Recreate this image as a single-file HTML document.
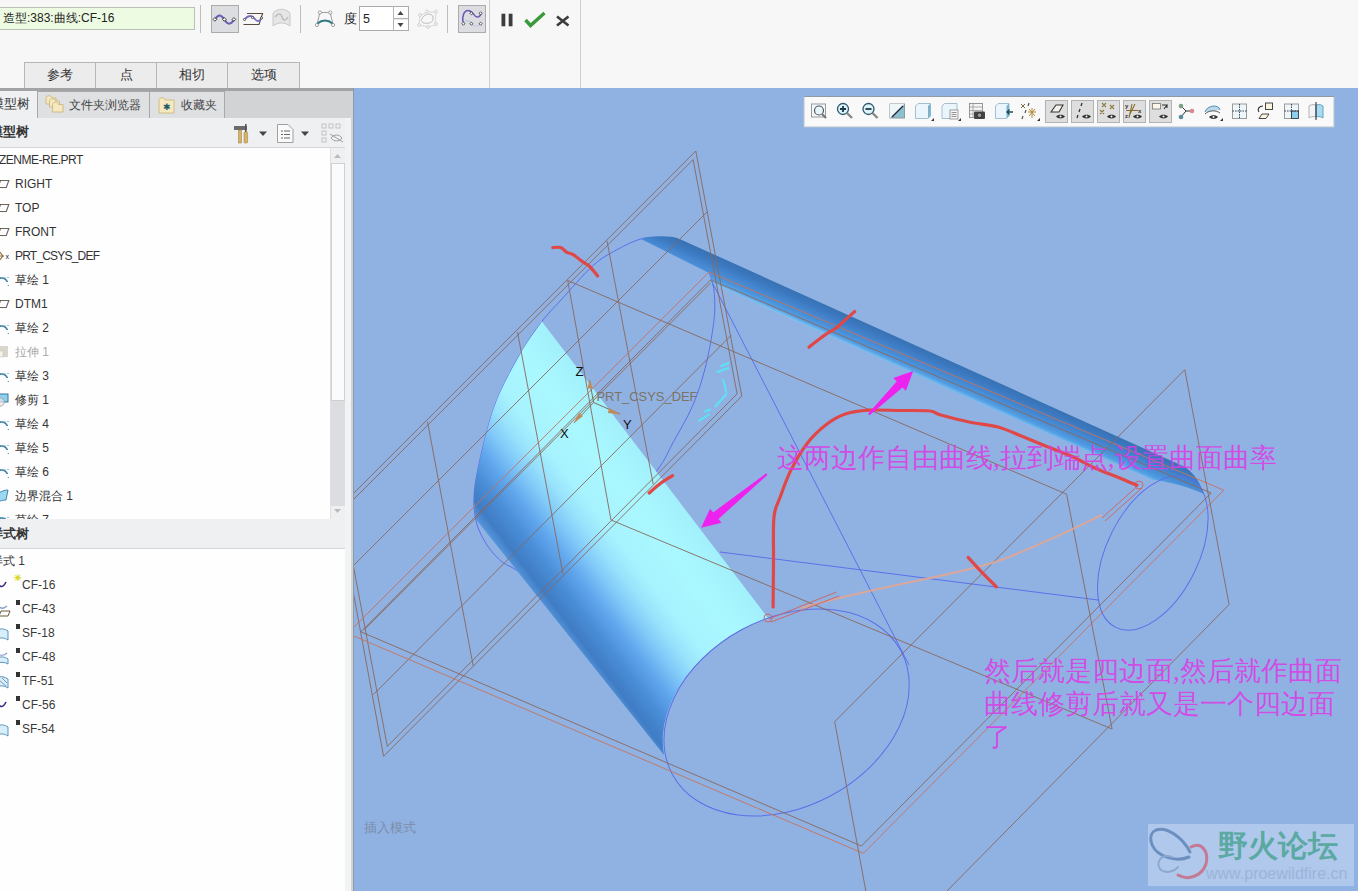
<!DOCTYPE html>
<html><head><meta charset="utf-8">
<style>
*{margin:0;padding:0;box-sizing:border-box}
html,body{width:1358px;height:891px;overflow:hidden;background:#f7f7f7;font-family:"Liberation Sans",sans-serif;font-size:12px;color:#333}
.abs{position:absolute}
svg{display:block}
#top{left:0;top:0;width:1358px;height:88px;background:#f7f7f7}
#field{left:-2px;top:7px;width:197px;height:23px;background:#eefbe3;border:1px solid #b9c0b5;font-size:12px;line-height:21px;padding-left:4px;color:#222;white-space:nowrap}
.sep{width:1px;background:#bdbdbd}
.vline{width:1px;background:#cfcfcf}
.ibox{background:#dcdde0;border:1px solid #ababab}
.rtab{top:62px;height:27px;background:#ececed;border:1px solid #b5b5b5;border-bottom:none;text-align:center;line-height:25px;font-size:12.5px;color:#333}
#ptabsbar{left:0;top:88px;width:353px;height:30px;background:#d2d3d5;border-top:3px solid #a3a3a3}
.ptab{top:91px;height:27px;background:#dfe0e2;border:1px solid #a8a8aa;border-bottom:none;line-height:26px;font-size:12px;color:#444;white-space:nowrap}
#hdr1{left:0;top:118px;width:346px;height:30px;background:#eff0f2;border-bottom:1px solid #d6d6d8}
#tree{left:0;top:148px;width:346px;height:371px;background:#fefefe}
#hdr2{left:0;top:519px;width:346px;height:30px;background:#eff0f2;border-bottom:1px solid #d6d6d8}
#tree2{left:0;top:549px;width:346px;height:342px;background:#fefefe}
#pgap{left:345px;top:118px;width:8px;height:773px;background:#f2f3f5;border-right:2px solid #d0d2d4}
#vp{left:353px;top:88px;width:1005px;height:803px;background:#8fb2e3;overflow:hidden;border-left:1px solid #8a9aa6}
.row{position:absolute;height:24px;line-height:24px;font-size:12px;color:#3a3a3a;white-space:nowrap}
.ic{position:absolute}
</style></head><body>
<div id="top" class="abs"></div>
<div id="field" class="abs">造型:383:曲线:CF-16</div>
<div class="abs sep" style="left:200px;top:5px;height:28px"></div>
<div class="abs ibox" style="left:211px;top:5px;width:28px;height:28px"></div>
<div class="abs sep" style="left:300px;top:5px;height:28px"></div>
<div class="abs sep" style="left:447px;top:5px;height:28px"></div>
<div class="abs ibox" style="left:458px;top:5px;width:28px;height:28px"></div>
<div class="abs vline" style="left:489px;top:0;height:88px"></div>
<div class="abs vline" style="left:580px;top:0;height:88px"></div>
<svg class="abs" style="left:0;top:0" width="600" height="40" viewBox="0 0 600 40">
 <!-- wave icon -->
 <path d="M215,19.5 C218,14 221,14 224.3,19.5 C227.5,25 231,25 234,19.5" fill="none" stroke="#6b5cb5" stroke-width="2"/>
 <g fill="#fff" stroke="#222" stroke-width="0.8"><rect x="213.6" y="18.1" width="2.6" height="2.6" transform="rotate(45 214.9 19.4)"/><rect x="223" y="18.1" width="2.6" height="2.6" transform="rotate(45 224.3 19.4)"/><rect x="232.6" y="18.1" width="2.6" height="2.6" transform="rotate(45 233.9 19.4)"/></g>
 <!-- curve on plane -->
 <path d="M247,13.5 L262.6,13.5 L259,24.5 L243.5,24.5" fill="none" stroke="#5a4a40" stroke-width="1.1"/>
 <path d="M244.5,19.5 C248,15 252,15 254.5,18.5 C257,22 259.5,22 261.5,18" fill="none" stroke="#7a6cc0" stroke-width="1.8"/>
 <g fill="#fff" stroke="#222" stroke-width="0.7"><circle cx="244.5" cy="19.5" r="1.1"/><circle cx="252.5" cy="17.5" r="1.1"/><circle cx="261.5" cy="18" r="1.1"/></g>
 <!-- gray surface -->
 <path d="M273,13 C278,8 285,8 290,13 L290,26 C285,22 278,22 273,26 Z" fill="#e6e6e6" stroke="#c8c8c8" stroke-width="1"/>
 <path d="M275,17 C278,13 281,13 282,17 C283,21 286,21 288,17" fill="none" stroke="#bdbdbd" stroke-width="1.5"/>
 <!-- degree icon -->
 <path d="M319.9,12.5 L330.2,12.5 L333.1,25 M319.9,12.5 L316.9,25" fill="none" stroke="#888" stroke-width="0.8"/>
 <path d="M317.5,23.5 C322,19.5 328,19.5 332.5,23.5" fill="none" stroke="#2c7a82" stroke-width="2"/>
 <g fill="#fff" stroke="#888" stroke-width="0.8"><circle cx="319.9" cy="12.5" r="1.6"/><circle cx="330.2" cy="12.5" r="1.6"/><circle cx="316.9" cy="25" r="1.6"/><circle cx="333.1" cy="25" r="1.6"/></g>
 <text x="343.5" y="23" font-family="Liberation Sans" font-size="13" fill="#222">度</text>
 <rect x="359.5" y="6.5" width="49" height="24" fill="#fff" stroke="#ababab"/>
 <line x1="393.5" y1="6.5" x2="393.5" y2="30.5" stroke="#b5b5b5"/>
 <line x1="394" y1="18.6" x2="408" y2="18.6" stroke="#b5b5b5" stroke-width="1.4"/>
 <path d="M397.5,15 L400.5,11 L403.5,15 Z M397.5,23 L400.5,27 L403.5,23 Z" fill="#444"/>
 <text x="363" y="23" font-family="Liberation Sans" font-size="12.5" fill="#222">5</text>
 <!-- gray blob icon -->
 <path d="M420,16 L427,12 L436,12 L435,25 L428,27 L419,25 Z" fill="none" stroke="#cfcfcf" stroke-width="0.8"/>
 <path d="M422,19 C423,14 432,12 433,17 C434,23 428,24 424,23 C421,22 421,20 422,19Z" fill="none" stroke="#bdbdbd" stroke-width="1"/>
 <g fill="#f3f3f3" stroke="#c8c8c8" stroke-width="0.7"><circle cx="420" cy="15" r="1.5"/><circle cx="427" cy="11.5" r="1.5"/><circle cx="436" cy="11.5" r="1.5"/><circle cx="436" cy="24" r="1.5"/><circle cx="428" cy="27" r="1.5"/><circle cx="419" cy="25" r="1.5"/></g>
 <!-- curvature selected icon -->
 <path d="M463,22 C462,16 464,10.5 468,10.5 C473,10.5 474,17 477,17 C480,17 481,14 481,13.3" fill="none" stroke="#6e5cb8" stroke-width="1.6"/>
 <path d="M463.3,23.6 C467,19 469,20 471.4,23.6 C474,27 478,27 480.6,23.6" fill="none" stroke="#c0cce0" stroke-width="1.4"/>
 <g fill="#fff" stroke="#222" stroke-width="0.7"><rect x="462.3" y="22.6" width="2.2" height="2.2" transform="rotate(45 463.4 23.7)"/><rect x="470.3" y="22.6" width="2.2" height="2.2" transform="rotate(45 471.4 23.7)"/><rect x="479.5" y="22.6" width="2.2" height="2.2" transform="rotate(45 480.6 23.7)"/><rect x="470.3" y="12.2" width="2.2" height="2.2" transform="rotate(45 471.4 13.3)"/><rect x="479.5" y="12.2" width="2.2" height="2.2" transform="rotate(45 480.6 13.3)"/></g>
 <!-- pause check x -->
 <rect x="501.5" y="13.7" width="3.8" height="12.6" fill="#3c3c3c"/><rect x="508.7" y="13.7" width="3.8" height="12.6" fill="#3c3c3c"/>
 <path d="M525.5,20 L530.5,25.5 L544.5,13" fill="none" stroke="#3a9a3a" stroke-width="3.4"/>
 <path d="M557,16.5 L568.5,25.5 M568.5,16.5 L557,25.5" stroke="#3c3c3c" stroke-width="2.6"/>
</svg>
<div class="abs rtab" style="left:24px;width:72px">参考</div>
<div class="abs rtab" style="left:95px;width:62px">点</div>
<div class="abs rtab" style="left:156px;width:72px">相切</div>
<div class="abs rtab" style="left:227px;width:73px">选项</div>

<div id="ptabsbar" class="abs"></div>
<div class="abs" style="left:0;top:91px;width:37px;height:28px;background:#eff0f2"></div>
<div class="abs row" style="left:-9px;top:92px;font-size:13px;line-height:24px;color:#333">模型树</div>
<div class="abs ptab" style="left:37px;width:113px;padding-left:31px">文件夹浏览器</div>
<div class="abs ptab" style="left:149px;width:76px;padding-left:31px">收藏夹</div>
<svg class="abs" style="left:44px;top:93px" width="24" height="24" viewBox="0 0 24 24">
 <g fill="#f6e9c0" stroke="#c9b27a" stroke-width="0.8"><path d="M2,5 C2,2 8,2 8,5 L12,5 L12,11 L2,11 Z"/><path d="M5.5,8 C5.5,5 11.5,5 11.5,8 L15.5,8 L15.5,14 L5.5,14 Z"/><path d="M8.5,11.5 C8.5,8.5 14.5,8.5 14.5,11.5 L19,11.5 L19,19 L8.5,19 Z"/></g>
</svg>
<svg class="abs" style="left:157px;top:94px" width="22" height="22" viewBox="0 0 22 22">
 <path d="M2,6 C2,3 8,3 8,6 L17,6 L17,19 L2,19 Z" fill="#f6e9c0" stroke="#c9b27a" stroke-width="0.8"/>
 <text x="6" y="16" font-size="9" fill="#1a5a6a" font-family="Liberation Sans">✱</text>
</svg>
<div id="hdr1" class="abs"></div>
<div class="abs row" style="left:-10px;top:120px;font-weight:bold;font-size:12.5px;color:#333">模型树</div>
<svg class="abs" style="left:230px;top:120px" width="116" height="26" viewBox="230 120 116 26">
 <path d="M234,126 L247,126 L247,130 L234,130 Z" fill="#6b6b6b"/>
 <rect x="238.5" y="130" width="3" height="13" fill="#d6b26a" stroke="#9a7a3a" stroke-width="0.5"/>
 <rect x="245" y="124" width="1.6" height="8" fill="#555"/>
 <rect x="244" y="132" width="3.6" height="11" rx="1" fill="#d6b26a" stroke="#9a7a3a" stroke-width="0.5"/>
 <path d="M259,131.5 L267,131.5 L263,136 Z" fill="#444"/>
 <path d="M277.5,124.5 L288,124.5 L293,129.5 L293,142.5 L277.5,142.5 Z" fill="#fafafa" stroke="#8a8a8a" stroke-width="0.8"/>
 <g stroke="#555" stroke-width="0.9"><line x1="281" y1="131" x2="283" y2="131"/><line x1="284" y1="131" x2="290" y2="131"/><line x1="281" y1="134.5" x2="283" y2="134.5"/><line x1="284" y1="134.5" x2="290" y2="134.5"/><line x1="281" y1="138" x2="283" y2="138"/><line x1="284" y1="138" x2="290" y2="138"/></g>
 <path d="M301,131.5 L309,131.5 L305,136 Z" fill="#444"/>
 <g fill="none" stroke="#b8b8b8" stroke-width="0.8"><rect x="322" y="124" width="4" height="4"/><rect x="322" y="131" width="4" height="4"/><rect x="322" y="138" width="4" height="4"/><rect x="329" y="124" width="4" height="4"/><rect x="336" y="124" width="4" height="4"/></g>
 <path d="M331,138 C334,134 339,134 342,138 C339,142 334,142 331,138 Z" fill="none" stroke="#a0a0a0" stroke-width="1"/>
 <line x1="330" y1="134" x2="343" y2="142" stroke="#a0a0a0" stroke-width="1"/>
</svg>
<div id="tree" class="abs">
<div class="row" style="left:-1px;top:0px;color:#333;letter-spacing:-0.5px;">ZENME-RE.PRT</div>
<svg class="ic" style="left:-4px;top:31px" width="14" height="10" viewBox="0 0 14 10"><path d="M4.5,1.5 L12.8,1.5 L10.3,8.5 L2,8.5 Z" fill="none" stroke="#6b6356" stroke-width="1.1"/></svg>
<div class="row" style="left:15px;top:24px;color:#333;">RIGHT</div>
<svg class="ic" style="left:-4px;top:55px" width="14" height="10" viewBox="0 0 14 10"><path d="M4.5,1.5 L12.8,1.5 L10.3,8.5 L2,8.5 Z" fill="none" stroke="#6b6356" stroke-width="1.1"/></svg>
<div class="row" style="left:15px;top:48px;color:#333;">TOP</div>
<svg class="ic" style="left:-4px;top:79px" width="14" height="10" viewBox="0 0 14 10"><path d="M4.5,1.5 L12.8,1.5 L10.3,8.5 L2,8.5 Z" fill="none" stroke="#6b6356" stroke-width="1.1"/></svg>
<div class="row" style="left:15px;top:72px;color:#333;">FRONT</div>
<svg class="ic" style="left:-4px;top:101px" width="16" height="14" viewBox="0 0 16 14"><g stroke="#8a6a3a" stroke-width="1.1" fill="none"><path d="M7,7 L2,1 M7,7 L2,13 M7,7 L0,7 M7,7 L8,7"/></g><text x="9.5" y="10" font-size="7" fill="#222" font-family="Liberation Sans">x</text></svg>
<div class="row" style="left:15px;top:96px;color:#333;letter-spacing:-0.8px;">PRT_CSYS_DEF</div>
<svg class="ic" style="left:-4px;top:127px" width="14" height="12" viewBox="0 0 14 12"><path d="M1,5 C4,2 9,2 11.5,7" fill="none" stroke="#3a7fa8" stroke-width="1.6"/><g fill="#6aa0c0"><circle cx="3" cy="9" r="0.7"/><circle cx="3" cy="11.3" r="0.7"/><circle cx="9" cy="3" r="0.7"/><circle cx="12" cy="2.5" r="0.7"/><circle cx="12.3" cy="10.5" r="0.7"/></g></svg>
<div class="row" style="left:15px;top:120px;color:#333;">草绘 1</div>
<svg class="ic" style="left:-4px;top:151px" width="14" height="10" viewBox="0 0 14 10"><path d="M4.5,1.5 L12.8,1.5 L10.3,8.5 L2,8.5 Z" fill="none" stroke="#6b6356" stroke-width="1.1"/></svg>
<div class="row" style="left:15px;top:144px;color:#333;">DTM1</div>
<svg class="ic" style="left:-4px;top:175px" width="14" height="12" viewBox="0 0 14 12"><path d="M1,5 C4,2 9,2 11.5,7" fill="none" stroke="#3a7fa8" stroke-width="1.6"/><g fill="#6aa0c0"><circle cx="3" cy="9" r="0.7"/><circle cx="3" cy="11.3" r="0.7"/><circle cx="9" cy="3" r="0.7"/><circle cx="12" cy="2.5" r="0.7"/><circle cx="12.3" cy="10.5" r="0.7"/></g></svg>
<div class="row" style="left:15px;top:168px;color:#333;">草绘 2</div>
<svg class="ic" style="left:-4px;top:197px" width="14" height="14" viewBox="0 0 14 14"><rect x="1" y="1" width="11" height="11" fill="#d9d6cc"/><rect x="1" y="6" width="6" height="6" fill="#f4f2ec" stroke="#c8c4b8" stroke-width="0.6"/></svg>
<div class="row" style="left:15px;top:192px;color:#aaa;">拉伸 1</div>
<svg class="ic" style="left:-4px;top:223px" width="14" height="12" viewBox="0 0 14 12"><path d="M1,5 C4,2 9,2 11.5,7" fill="none" stroke="#3a7fa8" stroke-width="1.6"/><g fill="#6aa0c0"><circle cx="3" cy="9" r="0.7"/><circle cx="3" cy="11.3" r="0.7"/><circle cx="9" cy="3" r="0.7"/><circle cx="12" cy="2.5" r="0.7"/><circle cx="12.3" cy="10.5" r="0.7"/></g></svg>
<div class="row" style="left:15px;top:216px;color:#333;">草绘 3</div>
<svg class="ic" style="left:-4px;top:245px" width="14" height="14" viewBox="0 0 14 14"><rect x="3" y="1" width="9" height="8" fill="#8ed0f0" stroke="#2a6a9a" stroke-width="0.9"/><circle cx="4" cy="9" r="4.2" fill="#e8e8e8" fill-opacity="0.7" stroke="#999" stroke-width="0.8"/></svg>
<div class="row" style="left:15px;top:240px;color:#333;">修剪 1</div>
<svg class="ic" style="left:-4px;top:271px" width="14" height="12" viewBox="0 0 14 12"><path d="M1,5 C4,2 9,2 11.5,7" fill="none" stroke="#3a7fa8" stroke-width="1.6"/><g fill="#6aa0c0"><circle cx="3" cy="9" r="0.7"/><circle cx="3" cy="11.3" r="0.7"/><circle cx="9" cy="3" r="0.7"/><circle cx="12" cy="2.5" r="0.7"/><circle cx="12.3" cy="10.5" r="0.7"/></g></svg>
<div class="row" style="left:15px;top:264px;color:#333;">草绘 4</div>
<svg class="ic" style="left:-4px;top:295px" width="14" height="12" viewBox="0 0 14 12"><path d="M1,5 C4,2 9,2 11.5,7" fill="none" stroke="#3a7fa8" stroke-width="1.6"/><g fill="#6aa0c0"><circle cx="3" cy="9" r="0.7"/><circle cx="3" cy="11.3" r="0.7"/><circle cx="9" cy="3" r="0.7"/><circle cx="12" cy="2.5" r="0.7"/><circle cx="12.3" cy="10.5" r="0.7"/></g></svg>
<div class="row" style="left:15px;top:288px;color:#333;">草绘 5</div>
<svg class="ic" style="left:-4px;top:319px" width="14" height="12" viewBox="0 0 14 12"><path d="M1,5 C4,2 9,2 11.5,7" fill="none" stroke="#3a7fa8" stroke-width="1.6"/><g fill="#6aa0c0"><circle cx="3" cy="9" r="0.7"/><circle cx="3" cy="11.3" r="0.7"/><circle cx="9" cy="3" r="0.7"/><circle cx="12" cy="2.5" r="0.7"/><circle cx="12.3" cy="10.5" r="0.7"/></g></svg>
<div class="row" style="left:15px;top:312px;color:#333;">草绘 6</div>
<svg class="ic" style="left:-4px;top:341px" width="14" height="14" viewBox="0 0 14 14"><path d="M2,5 C5,2 9,1 12,1 L10,11 C7,11 4,12 1,13 Z" fill="#9ad8f4" stroke="#3a7aa8" stroke-width="0.9"/></svg>
<div class="row" style="left:15px;top:336px;color:#333;">边界混合 1</div>
<svg class="ic" style="left:-4px;top:367px" width="14" height="12" viewBox="0 0 14 12"><path d="M1,5 C4,2 9,2 11.5,7" fill="none" stroke="#3a7fa8" stroke-width="1.6"/><g fill="#6aa0c0"><circle cx="3" cy="9" r="0.7"/><circle cx="3" cy="11.3" r="0.7"/><circle cx="9" cy="3" r="0.7"/><circle cx="12" cy="2.5" r="0.7"/><circle cx="12.3" cy="10.5" r="0.7"/></g></svg>
<div class="row" style="left:15px;top:360px;color:#333;">草绘 7</div>
<div class="abs" style="left:330px;top:0;width:15px;height:371px;background:#f0f0f2;border-left:1px solid #e0e0e2"></div>
<div class="abs" style="left:331px;top:15px;width:14px;height:238px;background:#fbfbfb;border:1px solid #d0d0d2"></div>
<div class="abs" style="left:331px;top:253px;width:14px;height:105px;background:#dcdde0"></div>
<svg class="abs" style="left:330px;top:0" width="15" height="371"><path d="M4,10 L7.5,6 L11,10Z" fill="#bbb"/><path d="M4,361 L7.5,365 L11,361Z" fill="#bbb"/></svg>
</div>
<div id="hdr2" class="abs"></div>
<div class="abs row" style="left:-10px;top:522px;font-weight:bold;font-size:12.5px;color:#333">样式树</div>
<div id="tree2" class="abs">
<div class="row" style="left:-9px;top:0px">样式 1</div>
<svg class="ic" style="left:-4px;top:30px" width="14" height="10" viewBox="0 0 14 10"><path d="M1,3 C4,9 7,9 10,3" fill="none" stroke="#3a2a8a" stroke-width="1.6"/></svg>
<div class="abs" style="left:14px;top:24px;font-size:9px;line-height:10px;color:#d8d820;font-weight:bold">✳</div>
<div class="row" style="left:22px;top:24px">CF-16</div>
<svg class="ic" style="left:-4px;top:54px" width="16" height="14" viewBox="0 0 16 14"><path d="M2,3 C5,6 8,6 11,3" fill="none" stroke="#8a9ac8" stroke-width="1.3"/><path d="M5,8 L14,8 L12,13 L3,13 Z" fill="none" stroke="#6b5a3a" stroke-width="1"/></svg>
<div class="abs" style="left:16px;top:51px;width:4px;height:5px;background:#333"></div>
<div class="row" style="left:22px;top:48px">CF-43</div>
<svg class="ic" style="left:-4px;top:78px" width="14" height="14" viewBox="0 0 14 14"><path d="M1,3 C5,1 9,2 12,4 L12,13 C9,11 5,10 1,12 Z" fill="#d8eefa" stroke="#4a8ab8" stroke-width="0.9"/></svg>
<div class="abs" style="left:16px;top:75px;width:4px;height:5px;background:#333"></div>
<div class="row" style="left:22px;top:72px">SF-18</div>
<svg class="ic" style="left:-4px;top:102px" width="14" height="14" viewBox="0 0 14 14"><path d="M1,2 C4,5 8,5 11,2" fill="none" stroke="#8a9ac8" stroke-width="1.2"/><path d="M1,7 C5,5 9,6 12,8 L12,13 C9,11 5,11 1,12 Z" fill="#d8eefa" stroke="#4a8ab8" stroke-width="0.9"/></svg>
<div class="abs" style="left:16px;top:99px;width:4px;height:5px;background:#333"></div>
<div class="row" style="left:22px;top:96px">CF-48</div>
<svg class="ic" style="left:-4px;top:126px" width="14" height="14" viewBox="0 0 14 14"><path d="M1,2 C5,1 9,2 12,4 L12,13 C9,11 5,10 1,12 Z" fill="#d8eefa" stroke="#4a8ab8" stroke-width="0.9"/><path d="M3,5 L10,11 M6,3 L11,8" stroke="#5a6a9a" stroke-width="0.7"/></svg>
<div class="abs" style="left:16px;top:123px;width:4px;height:5px;background:#333"></div>
<div class="row" style="left:22px;top:120px">TF-51</div>
<svg class="ic" style="left:-4px;top:150px" width="14" height="10" viewBox="0 0 14 10"><path d="M1,3 C4,9 7,9 10,3" fill="none" stroke="#3a2a8a" stroke-width="1.6"/></svg>
<div class="abs" style="left:16px;top:147px;width:4px;height:5px;background:#333"></div>
<div class="row" style="left:22px;top:144px">CF-56</div>
<svg class="ic" style="left:-4px;top:174px" width="14" height="14" viewBox="0 0 14 14"><path d="M1,3 C5,1 9,2 12,4 L12,13 C9,11 5,10 1,12 Z" fill="#d8eefa" stroke="#4a8ab8" stroke-width="0.9"/></svg>
<div class="abs" style="left:16px;top:171px;width:4px;height:5px;background:#333"></div>
<div class="row" style="left:22px;top:168px">SF-54</div>
</div>
<div id="pgap" class="abs"></div>
<div id="vp" class="abs"><svg width="1005" height="803" viewBox="353 88 1005 803" style="position:absolute;left:0;top:0">
<defs>
<linearGradient id="cyl" gradientUnits="userSpaceOnUse" x1="474" y1="519" x2="610" y2="415">
<stop offset="0" stop-color="#5898de"/>
<stop offset="0.06" stop-color="#3f7cc4"/>
<stop offset="0.17" stop-color="#4a8ed8"/>
<stop offset="0.28" stop-color="#62a8ee"/>
<stop offset="0.38" stop-color="#80c8f8"/>
<stop offset="0.48" stop-color="#98e2fc"/>
<stop offset="0.58" stop-color="#a6f2fe"/>
<stop offset="0.8" stop-color="#aaf8ff"/>
<stop offset="1" stop-color="#a2f0fb"/>
</linearGradient>
<linearGradient id="tube" gradientUnits="userSpaceOnUse" x1="880" y1="329.8" x2="868.8" y2="354.7">
<stop offset="0" stop-color="#3872b4"/>
<stop offset="0.220" stop-color="#3b78bf"/>
<stop offset="0.476" stop-color="#4486cf"/>
<stop offset="0.696" stop-color="#4a92da"/>
<stop offset="0.842" stop-color="#539fe4"/>
<stop offset="0.934" stop-color="#70b6ee"/>
<stop offset="1" stop-color="#88c4ef"/>
</linearGradient>
<linearGradient id="cylov" gradientUnits="userSpaceOnUse" x1="462" y1="485" x2="535" y2="580">
<stop offset="0" stop-color="#8fd6ff" stop-opacity="0"/>
<stop offset="1" stop-color="#8fd6ff" stop-opacity="0"/>
</linearGradient>
</defs>
<!-- far ellipse (behind) -->
<path d="M640.0,238.9 C632.6,241.0 623.4,245.5 615.4,250.0 C607.4,254.5 601.0,257.4 591.8,265.7 C582.6,274.0 568.5,290.7 560.0,300.0 C551.5,309.3 547.7,312.6 540.9,321.6 C534.1,330.6 526.8,340.8 519.3,353.9 C511.8,367.0 502.0,384.8 495.9,400.0 C489.8,415.2 486.1,429.9 482.4,444.9 C478.7,459.9 474.8,477.5 473.5,489.8 C472.2,502.1 473.1,510.7 474.6,518.9 C476.1,527.1 479.2,533.1 482.4,539.1 C485.6,545.1 489.4,550.3 493.7,554.8 C498.0,559.3 500.5,562.6 508.2,566.0 C515.9,569.4 524.7,579.3 540.0,575.0 C555.3,570.7 580.9,557.1 600.0,540.0 C619.1,522.9 642.6,488.7 654.6,472.5 C666.6,456.3 665.7,453.9 671.9,442.8 C678.1,431.7 686.2,418.1 691.6,405.8 C697.0,393.5 700.7,381.2 704.0,368.8 C707.3,356.4 709.8,342.0 711.4,331.7 C713.0,321.4 713.8,315.2 713.8,307.0 C713.8,298.8 713.7,290.6 711.4,282.3 C709.1,274.0 705.2,263.7 700.0,257.0 C694.8,250.3 686.7,245.2 680.0,242.0 C673.3,238.8 666.7,238.0 660.0,237.5 C653.3,237.0 647.4,236.8 640.0,238.9 Z" fill="none" stroke="#5d6fe8" stroke-width="1"/>
<!-- cylinder surface -->
<path d="M540.9,321.6 L767,618 A129.9 94.25 -28.6 0 0 663,755 L474.6,518.9 C474.4,514.0 472.2,502.1 473.5,489.8 C474.8,477.5 478.7,459.9 482.4,444.9 C486.1,429.9 489.8,415.2 495.9,400.0 C502.0,384.8 511.8,367.0 519.3,353.9 C526.8,340.8 537.3,327.0 540.9,321.6 Z" fill="url(#cyl)"/>
<path d="M540.9,321.6 L767,618 A129.9 94.25 -28.6 0 0 663,755 L474.6,518.9 C474.4,514.0 472.2,502.1 473.5,489.8 C474.8,477.5 478.7,459.9 482.4,444.9 C486.1,429.9 489.8,415.2 495.9,400.0 C502.0,384.8 511.8,367.0 519.3,353.9 C526.8,340.8 537.3,327.0 540.9,321.6 Z" fill="url(#cylov)"/>
<!-- tube -->
<path d="M640,239 C650,236 668,235 678,238.7 L1184,466.9 C1194,474 1200,484 1203,494 C1190,488 1170,482 1150,479.6 L711.5,283.8 L709.5,273.7 Z" fill="url(#tube)"/>
<!-- front ellipse -->
<ellipse cx="785.6" cy="712.5" rx="129.9" ry="94.25" transform="rotate(-28.6 785.6 712.5)" fill="none" stroke="#5d6fe8" stroke-width="1"/>
<ellipse cx="1151.8" cy="553" rx="83.1" ry="45.8" transform="rotate(-63.5 1151.8 553)" fill="none" stroke="#5d6fe8" stroke-width="1"/>
<!-- blue lines -->
<line x1="710.5" y1="281" x2="908" y2="665" stroke="#5d6fe8" stroke-width="1"/>
<line x1="719" y1="552" x2="1097" y2="600" stroke="#5d6fe8" stroke-width="1"/>
<polyline points="694.8,151.0 340.0,506.0" fill="none" stroke="#89675d" stroke-width="1" stroke-opacity="0.9"/>
<polyline points="694.8,151.0 740.8,396.1 382.6,756.3 335.2,500.0" fill="none" stroke="#89675d" stroke-width="1" stroke-opacity="0.9"/>
<polyline points="692.1,159.6 340.0,512.0" fill="none" stroke="#89675d" stroke-width="1" stroke-opacity="0.9"/>
<polyline points="692.1,159.6 736.1,393.8 386.3,746.4 340.0,500.0" fill="none" stroke="#89675d" stroke-width="1" stroke-opacity="0.9"/>
<polyline points="426.5,421.7 472.2,665.9" fill="none" stroke="#89675d" stroke-width="1" stroke-opacity="0.9"/>
<polyline points="516.5,332.0 562.0,574.0" fill="none" stroke="#89675d" stroke-width="1" stroke-opacity="0.9"/>
<polyline points="566.7,280.5 610.0,520.0" fill="none" stroke="#89675d" stroke-width="1" stroke-opacity="0.9"/>
<polyline points="606.0,240.9 652.2,484.2" fill="none" stroke="#89675d" stroke-width="1" stroke-opacity="0.9"/>
<polyline points="706.5,211.5 340.0,578.0" fill="none" stroke="#89675d" stroke-width="1" stroke-opacity="0.9"/>
<polyline points="730.2,335.2 372.5,694.5" fill="none" stroke="#89675d" stroke-width="1" stroke-opacity="0.9"/>
<polyline points="708.1,272.0 340.0,640.0" fill="none" stroke="#c6725c" stroke-width="1" stroke-opacity="0.9"/>
<polyline points="340.0,630.5 862.3,853.4 1222.8,490.2 708.1,272.0" fill="none" stroke="#c6725c" stroke-width="1" stroke-opacity="0.9"/>
<polyline points="709.6,279.9 359.9,631.8 860.4,846.0 1210.2,493.0 709.6,279.9" fill="none" stroke="#89675d" stroke-width="1" stroke-opacity="0.9"/>
<polyline points="709.6,283.0 363.5,629.5" fill="none" stroke="#89675d" stroke-width="1" stroke-opacity="0.9"/>
<polyline points="566.7,280.5 1065.6,494.2 1111.1,729.0 610.0,520.0" fill="none" stroke="#89675d" stroke-width="1" stroke-opacity="0.9"/>
<polyline points="833.7,721.7 1183.8,369.7 1228.1,604.6 878.0,960.0" fill="none" stroke="#89675d" stroke-width="1" stroke-opacity="0.9"/>
<polyline points="833.7,721.7 872.0,930.0" fill="none" stroke="#89675d" stroke-width="1" stroke-opacity="0.9"/>
<!-- salmon curve & handles -->
<path d="M800,608 C880,585 960,575 1000,560 C1040,545 1080,525 1101,515" fill="none" stroke="#e2a592" stroke-width="2" stroke-opacity="0.9"/>
<g stroke="#c86a6a" stroke-width="1" fill="none">
<line x1="768" y1="619" x2="835.5" y2="592"/><line x1="770" y1="622" x2="838" y2="596"/>
<line x1="1101" y1="518" x2="1138" y2="484.7"/><line x1="1104" y1="521" x2="1141" y2="488"/>
<circle cx="767" cy="618" r="4"/><circle cx="1138" cy="485" r="4"/>
</g>
<!-- red strokes -->
<g fill="none" stroke="#e04848" stroke-width="3.2" stroke-linecap="round" stroke-linejoin="round">
<path d="M772.1,607.0 C772.2,599.2 772.4,575.0 772.5,560.0 C772.6,545.0 771.9,527.1 773.0,516.7 C774.1,506.3 776.1,505.4 778.9,497.8 C781.7,490.2 785.1,479.9 789.6,470.9 C794.1,461.9 799.9,451.5 805.8,443.9 C811.6,436.2 818.4,429.9 824.7,425.0 C831.0,420.1 836.4,416.8 843.6,414.3 C850.8,411.8 858.4,410.8 867.8,410.2 C877.2,409.6 889.8,410.4 900.0,410.5 C910.2,410.6 922.5,410.3 929.0,411.0 C935.5,411.7 932.5,413.0 939.0,414.8 C945.5,416.6 958.3,420.0 968.0,422.0 C977.7,424.0 988.1,424.6 997.0,427.0 C1005.9,429.4 1013.4,433.4 1021.5,436.6 C1029.6,439.8 1037.7,443.2 1045.8,446.4 C1053.9,449.6 1061.9,452.4 1070.0,456.0 C1078.1,459.6 1086.3,464.5 1094.4,468.2 C1102.5,471.9 1111.8,475.2 1118.7,478.0 C1125.6,480.8 1132.9,484.0 1135.7,485.2"/>
<path d="M551.8,247.6 C553.1,247.6 557.2,246.8 559.6,247.6 C562.0,248.4 563.8,251.1 565.9,252.3 C568.0,253.5 569.6,253.1 572.2,254.7 C574.8,256.3 578.9,259.8 581.6,261.8 C584.4,263.8 586.2,264.1 588.7,266.5 C591.2,268.9 595.3,274.3 596.6,275.9"/>
<path d="M808.0,347.2 C809.5,346.1 814.1,342.4 816.9,340.3 C819.7,338.2 821.8,336.3 824.8,334.3 C827.8,332.3 831.5,330.8 834.8,328.3 C838.1,325.8 841.6,322.2 844.7,319.4 C847.9,316.6 852.2,312.8 853.7,311.5"/>
<path d="M648.1,493.0 C650.1,491.3 656.4,485.7 660.3,482.8 C664.2,479.9 669.7,476.8 671.6,475.6"/>
<path d="M967.1,557.4 C969.2,559.7 975.0,566.2 979.7,571.1 C984.4,576.0 992.8,584.2 995.4,586.8"/>
</g>
<!-- magenta arrows -->
<polygon points="868.5,415.2 901.5,387.4 904.9,390.8 912.2,371.1 892.3,377.9 895.7,381.4 867.1,413.8" fill="#ee22ee"/>
<polygon points="765.2,473.3 712.2,512.4 709.1,508.7 700.1,527.7 720.5,522.7 717.5,518.9 766.4,474.9" fill="#ee22ee"/>
<!-- text -->
<g font-family="Liberation Serif" font-size="27" fill="#dd3ae6" fill-opacity="0.85">
<text x="776" y="467">这两边作自由曲线,拉到端点,设置曲面曲率</text>
<text x="983" y="680">然后就是四边面,然后就作曲面</text>
<text x="983" y="713">曲线修剪后就又是一个四边面</text>
<text x="983" y="746">了</text>
</g>
<text x="363" y="831.5" font-family="Liberation Sans" font-size="13" fill="#7d8ca8">插入模式</text>
<g id="csys">
<g stroke="#7a7060" stroke-width="1" fill="none">
<line x1="592.6" y1="402.5" x2="588.5" y2="380"/>
<line x1="592.6" y1="402.5" x2="619" y2="414"/>
<line x1="592.6" y1="402.5" x2="573" y2="423"/>
</g>
<g fill="#c08a5a">
<path d="M588.5,379 L586.5,389 L591.5,388 Z"/>
<path d="M620,414.5 L608,408 L607,413 Z"/>
<path d="M572.5,423.5 L582,416 L578,413 Z"/>
</g>
<text x="574.5" y="375.5" font-family="Liberation Sans" font-size="13" fill="#111">Z</text>
<text x="622" y="428.5" font-family="Liberation Sans" font-size="13" fill="#111">Y</text>
<text x="559" y="437.5" font-family="Liberation Sans" font-size="13" fill="#111">X</text>
<text x="595.5" y="400.5" font-family="Liberation Sans" font-size="13" fill="#7d7264" textLength="101" lengthAdjust="spacingAndGlyphs">PRT_CSYS_DEF</text>
<g stroke="#5ce2f6" stroke-width="2" stroke-linecap="round">
<line x1="720.3" y1="366" x2="727.4" y2="363"/>
<line x1="716.3" y1="372" x2="727.4" y2="368"/>
<line x1="722.3" y1="380" x2="725.4" y2="392.3"/>
<line x1="725.4" y1="394.3" x2="714.2" y2="406.5"/>
<line x1="704.1" y1="411.5" x2="709.2" y2="409.5"/>
<line x1="698.1" y1="420.6" x2="708.2" y2="414.5"/>
</g>
</g>

<g id="vtool">
<rect x="803" y="96.5" width="530" height="30.5" fill="#f9f9f9" stroke="#b9c3cf" stroke-width="1"/>
<line x1="803" y1="96.5" x2="1333" y2="96.5" stroke="#8f9aa6" stroke-width="1"/>
<!-- selected boxes -->
<g fill="#dedede" stroke="#b2b2b2" stroke-width="1">
<rect x="1044.5" y="100.5" width="22" height="22"/><rect x="1070.5" y="100.5" width="22" height="22"/><rect x="1096.5" y="100.5" width="22" height="22"/><rect x="1122.5" y="100.5" width="22" height="22"/><rect x="1148.5" y="100.5" width="22" height="22"/>
</g>
<!-- 1 zoom window -->
<rect x="810.5" y="104" width="14" height="13" fill="#f4f8fa" stroke="#9a9a9a" stroke-width="1"/>
<circle cx="818" cy="110.5" r="4.5" fill="#e8f6fa" stroke="#4a5a60" stroke-width="1.2"/>
<line x1="821" y1="114" x2="825" y2="118" stroke="#777" stroke-width="2.2"/>
<!-- 2 zoom in -->
<circle cx="842" cy="109" r="5.5" fill="#dff2f8" stroke="#2a5a6a" stroke-width="1.3"/>
<path d="M839,109 L845,109 M842,106 L842,112" stroke="#1a3a4a" stroke-width="1.8"/>
<line x1="846" y1="113" x2="851" y2="118" stroke="#888" stroke-width="2.4"/>
<!-- 3 zoom out -->
<circle cx="867.5" cy="109" r="5.5" fill="#dff2f8" stroke="#2a5a6a" stroke-width="1.3"/>
<path d="M864.5,109 L870.5,109" stroke="#1a3a4a" stroke-width="1.8"/>
<line x1="871.5" y1="113" x2="876.5" y2="118" stroke="#888" stroke-width="2.4"/>
<!-- 4 refit -->
<rect x="889" y="104" width="14.5" height="14" fill="#8cc0d0" stroke="#8a9a9e" stroke-width="1"/>
<path d="M889,118 L903.5,104 L889,104 Z" fill="#eef6f8"/>
<line x1="891" y1="117" x2="902" y2="106" stroke="#223" stroke-width="1.3"/>
<!-- 5 cube -->
<path d="M914.5,106 L917,103.5 L929.5,103.5 L929.5,116 L927,118.5 L914.5,118.5 Z" fill="#eaf6fb" stroke="#9ab8c8" stroke-width="0.9"/>
<path d="M927,106 L929.5,103.5 L929.5,116 L927,118.5 Z" fill="#7ab4cc"/>
<path d="M930,121 L933,118 L933,121 Z" fill="#333"/>
<!-- 6 cube list -->
<path d="M941,106 L943.5,103.5 L956,103.5 L956,116 L953.5,118.5 L941,118.5 Z" fill="#eaf6fb" stroke="#9ab8c8" stroke-width="0.9"/>
<rect x="949" y="110" width="8" height="9" fill="#f7f7f7" stroke="#888" stroke-width="0.8"/>
<path d="M950.5,112.5 L955.5,112.5 M950.5,114.5 L955.5,114.5 M950.5,116.5 L955.5,116.5" stroke="#666" stroke-width="0.7"/>
<path d="M957,121 L960,118 L960,121 Z" fill="#333"/>
<!-- 7 table camera -->
<rect x="968.5" y="103.5" width="13" height="14" fill="#f4f4f4" stroke="#8a8a8a" stroke-width="0.9"/>
<path d="M968.5,107 L981.5,107 M968.5,110.5 L981.5,110.5 M968.5,114 L981.5,114 M972,103.5 L972,117.5" stroke="#9a9a9a" stroke-width="0.8"/>
<rect x="973" y="111.5" width="11" height="7.5" rx="1" fill="#444"/>
<circle cx="978.5" cy="115.2" r="2.4" fill="#999" stroke="#222" stroke-width="0.8"/>
<!-- 8 cube arrow -->
<path d="M994.5,106 L997,103.5 L1008,103.5 L1008,116 L1005.5,118.5 L994.5,118.5 Z" fill="#eaf6fb" stroke="#9ab8c8" stroke-width="0.9"/>
<path d="M1005.5,106 L1008,103.5 L1008,116 L1005.5,118.5 Z" fill="#7ab4cc"/>
<path d="M1012,112 L1006,112 M1008.5,109.5 L1006,112 L1008.5,114.5" stroke="#1a4a5a" stroke-width="1.3" fill="none"/>
<!-- 9 datum display -->
<path d="M1020,104 L1024,108 M1024,104 L1020,108" stroke="#7a6a40" stroke-width="1"/>
<path d="M1028,103 L1027,106 M1025,110 L1024,113 M1022,116 L1021,119" stroke="#555" stroke-width="1.2"/>
<path d="M1027,112 L1035,112 M1031,108 L1031,118 M1028,109 L1034,116 M1034,109 L1028,116" stroke="#b08a3a" stroke-width="1"/>
<path d="M1036,121 L1039,118 L1039,121 Z" fill="#333"/>
<!-- 10 plane eye -->
<path d="M1050,112 L1055,105 L1062,105 L1058,112 Z" fill="#f4f2ea" stroke="#333" stroke-width="1.1"/>
<path d="M1055,116.5 C1057,114 1062,114 1064,116.5 C1062,119 1057,119 1055,116.5Z" fill="#333"/><circle cx="1059.5" cy="116.5" r="1" fill="#fff"/>
<!-- 11 axis eye -->
<path d="M1081,103 L1080,106 M1079,109 L1078,112 M1077,115 L1076,118" stroke="#333" stroke-width="1.3"/>
<path d="M1081,116.5 C1083,114 1088,114 1090,116.5 C1088,119 1083,119 1081,116.5Z" fill="#333"/><circle cx="1085.5" cy="116.5" r="1" fill="#fff"/>
<!-- 12 points eye -->
<path d="M1101,103 L1105,107 M1105,103 L1101,107 M1109,105 L1113,109 M1113,105 L1109,109 M1099,110 L1103,114 M1103,110 L1099,114" stroke="#8a7a40" stroke-width="1.1"/>
<path d="M1106,116.5 C1108,114 1113,114 1115,116.5 C1113,119 1108,119 1106,116.5Z" fill="#333"/><circle cx="1110.5" cy="116.5" r="1" fill="#fff"/>
<!-- 13 csys eye -->
<path d="M1125,110.5 L1137,110.5 M1131,104 L1128,118 M1134,104 L1128,116" stroke="#8a6a30" stroke-width="1.1"/>
<text x="1124" y="108" font-size="6" font-family="Liberation Sans" fill="#333" font-weight="bold">y</text>
<text x="1124" y="118" font-size="6" font-family="Liberation Sans" fill="#333" font-weight="bold">z</text>
<text x="1137" y="113" font-size="6" font-family="Liberation Sans" fill="#333" font-weight="bold">x</text>
<path d="M1132,116.5 C1134,114 1139,114 1141,116.5 C1139,119 1134,119 1132,116.5Z" fill="#333"/><circle cx="1136.5" cy="116.5" r="1" fill="#fff"/>
<!-- 14 annotation eye -->
<rect x="1151.5" y="103.5" width="8" height="5.5" fill="#fcf6e6" stroke="#777" stroke-width="0.8"/>
<path d="M1161,105 L1166,105 L1163,109 M1166,105 L1166,108" stroke="#333" stroke-width="1.1" fill="none"/>
<path d="M1158,116.5 C1160,114 1165,114 1167,116.5 C1165,119 1160,119 1158,116.5Z" fill="#333"/><circle cx="1162.5" cy="116.5" r="1" fill="#fff"/>
<!-- 15 nodes -->
<path d="M1180,106 L1185,111 L1191,111 M1185,111 L1180,117" stroke="#333" stroke-width="1" fill="none"/>
<circle cx="1180" cy="106" r="2.3" fill="#7aa088"/><circle cx="1191" cy="111" r="2.3" fill="#d88a8a"/><circle cx="1180" cy="117" r="2.3" fill="#5a8aa0"/>
<!-- 16 curve eye -->
<path d="M1204,112 C1206,105 1218,104 1219,110" fill="#b8d8ec" stroke="#5a8ab0" stroke-width="1"/>
<path d="M1204,114 C1208,110 1215,110 1219,113" fill="none" stroke="#444" stroke-width="0.9"/>
<path d="M1208,117 C1210,114.5 1215,114.5 1217,117 C1215,119.5 1210,119.5 1208,117Z" fill="#333"/><circle cx="1212.5" cy="117" r="1" fill="#fff"/>
<path d="M1219,121 L1222,118 L1222,121 Z" fill="#333"/>
<!-- 17 grid -->
<rect x="1231.5" y="104" width="14" height="14.5" fill="#eef6fa" stroke="#9a9a9a" stroke-width="1"/>
<path d="M1238.5,104 L1238.5,118.5 M1231.5,111 L1245.5,111" stroke="#234" stroke-width="0.9" stroke-dasharray="1.5,1"/>
<!-- 18 swap -->
<rect x="1264.5" y="103" width="7" height="6.5" fill="#fcf4e0" stroke="#333" stroke-width="0.9"/>
<path d="M1258,118.5 L1261,114 L1268,114 L1265,118.5 Z" fill="#fcf4e0" stroke="#333" stroke-width="0.9"/>
<path d="M1258,112 C1256,109 1258,106 1262,106" fill="none" stroke="#333" stroke-width="1.1"/>
<!-- 19 grid blue -->
<rect x="1283.5" y="104" width="14" height="14.5" fill="#eef6fa" stroke="#9a9a9a" stroke-width="1"/>
<rect x="1290.5" y="111" width="7" height="7.5" fill="#8cd0f0" stroke="#333" stroke-width="0.8"/>
<path d="M1290.5,104 L1290.5,118.5 M1283.5,111 L1297.5,111" stroke="#234" stroke-width="0.9" stroke-dasharray="1.5,1"/>
<!-- 20 book -->
<path d="M1315,105 C1312,104 1309,105 1308,106 L1308,118 C1309,117 1312,116 1315,117 Z" fill="#f4f4f4" stroke="#aaa" stroke-width="0.9"/>
<path d="M1315,105 C1318,104 1321,105 1322,106 L1322,118 C1321,117 1318,116 1315,117 Z" fill="#a8dcf4" stroke="#5a9ab8" stroke-width="0.9"/>
<line x1="1315" y1="102" x2="1315" y2="120" stroke="#333" stroke-width="1.1"/>
</g>

<!-- watermark -->
<rect x="1147" y="824" width="206" height="62" fill="#afc8ec"/>
<text x="1217" y="855.5" font-family="Liberation Sans" font-size="29.5" font-weight="bold" fill="#5aa9a2">野火论坛</text>
<g fill="none" stroke-linecap="round">
<path d="M1189,852 C1182,838 1166,826 1155,830 C1146,834 1149,849 1161,855 C1171,860 1181,860 1188,857" stroke="#6c8fbf" stroke-width="3"/>
<path d="M1190,847 C1201,841 1208,852 1205,864 C1201,876 1187,881 1177,875" stroke="#c47a94" stroke-width="3"/>
<path d="M1171,857 C1159,853 1154,864 1160,870 C1166,874 1174,871 1177,867" stroke="#8aa8cf" stroke-width="2"/>
</g>
<text x="1205" y="879" font-family="Liberation Sans" font-size="16" fill="#9bb4d8">www.proewildfire.cn</text>
</svg>
</div>
</body></html>
